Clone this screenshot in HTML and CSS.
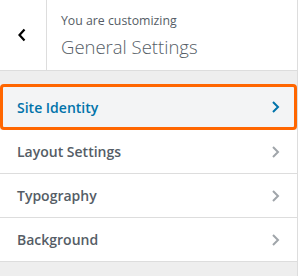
FILE: index.html
```html
<!DOCTYPE html>
<html>
<head>
<meta charset="utf-8">
<link rel="stylesheet" href="styles.css">
</head>
<body>
<div class="panel">
  <div class="header">
    <button class="back" aria-label="Back">
      <svg width="10" height="14" viewBox="0 0 10 14"><path d="M7.5 1.5 L2.5 7 L7.5 12.5" fill="none" stroke="#000" stroke-width="2.2"/></svg>
    </button>
    <div class="title">
      <span class="sub">You are customizing</span>
      <span class="name">General Settings</span>
    </div>
  </div>
  <ul class="sections">
    <li class="item active"><span>Site Identity</span>
      <svg class="chev" width="10" height="12" viewBox="0 0 10 12"><path d="M2 1 L7 6 L2 11" fill="none" stroke="currentColor" stroke-width="2"/></svg></li>
    <li class="item"><span>Layout Settings</span>
      <svg class="chev" width="10" height="12" viewBox="0 0 10 12"><path d="M2 1 L7 6 L2 11" fill="none" stroke="currentColor" stroke-width="2"/></svg></li>
    <li class="item"><span>Typography</span>
      <svg class="chev" width="10" height="12" viewBox="0 0 10 12"><path d="M2 1 L7 6 L2 11" fill="none" stroke="currentColor" stroke-width="2"/></svg></li>
    <li class="item"><span>Background</span>
      <svg class="chev" width="10" height="12" viewBox="0 0 10 12"><path d="M2 1 L7 6 L2 11" fill="none" stroke="currentColor" stroke-width="2"/></svg></li>
  </ul>
</div>
</body>
</html>
```
FILE: styles.css
```css
html, body {
  margin: 0;
  padding: 0;
  background: #fff;
}
.panel {
  width: 297px;
  height: 276px;
  background: #eee;
  border-right: 1px solid #ddd;
  font-family: "Open Sans", sans-serif;
}
.header {
  display: flex;
  height: 70px;
  background: #fff;
  border-bottom: 1px solid #ddd;
}
.back {
  width: 47px;
  height: 70px;
  padding: 0;
  margin: 0;
  border: 0;
  border-right: 1px solid #ddd;
  background: #fff;
  display: flex;
  align-items: center;
  justify-content: center;
  padding-right: 3px;
}
.back svg { display: block; }
.title {
  display: flex;
  flex-direction: column;
  padding: 11px 0 0 14px;
  color: #555d66;
}
.sub {
  font-size: 12.3px;
  line-height: 20px;
}
.name {
  font-size: 18.5px;
  font-weight: 300;
  line-height: 32px;
}
.sections {
  list-style: none;
  margin: 13px 0 0;
  padding: 0;
}
.item {
  display: flex;
  align-items: center;
  justify-content: space-between;
  height: 43px;
  padding: 0 16px 0 17px;
  background: #fff;
  border-bottom: 1px solid #ddd;
  color: #555d66;
  font-size: 14px;
  font-weight: 600;
}
.item .chev { color: #a0a5aa; }
.item.active {
  height: 40px;
  padding: 0 13px 0 14px;
  background: #f3f4f5;
  border: 3px solid #ff6600;
  border-radius: 4px;
  color: #0073aa;
}
.item.active .chev { color: #0073aa; }
```
